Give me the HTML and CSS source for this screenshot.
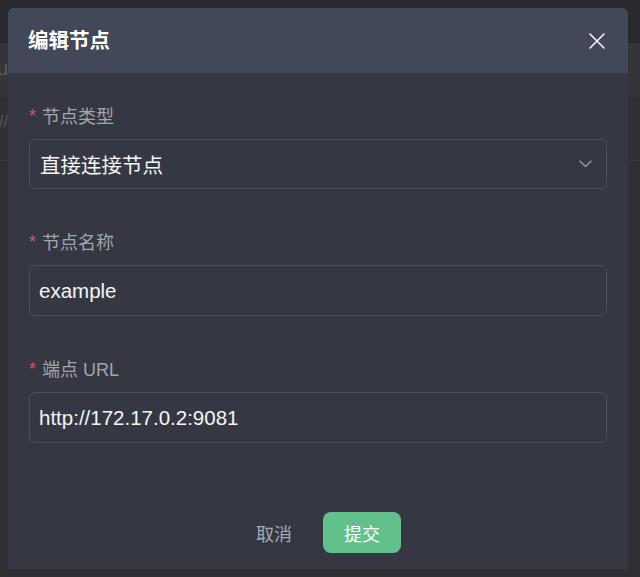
FILE: index.html
```html
<!DOCTYPE html>
<html lang="zh">
<head>
<meta charset="utf-8">
<link rel="stylesheet" href="styles.css">
</head>
<body>
<div class="page">
  <div class="band band-top"></div>
  <div class="band band-row"><span class="peek peek-u">u</span></div>
  <div class="band band-sub"><span class="peek peek-slash">//</span></div>
  <div class="band band-rest"></div>
</div>
<div class="modal">
  <div class="modal-header">
    <span class="modal-title">编辑节点</span>
    <svg class="close" width="16" height="16" viewBox="0 0 16 16"><path d="M1 1L15 15M15 1L1 15" stroke="#f2f3f5" stroke-width="1.6" fill="none" stroke-linecap="round"/></svg>
  </div>
  <div class="modal-body">
    <div class="field">
      <div class="label"><span class="req">*</span>节点类型</div>
      <div class="input select"><span>直接连接节点</span>
        <svg class="chev" width="13" height="8" viewBox="0 0 13 8"><path d="M1 1.2L6.5 6.5L12 1.2" stroke="#8a8e99" stroke-width="1.6" fill="none" stroke-linecap="round" stroke-linejoin="round"/></svg>
      </div>
    </div>
    <div class="field">
      <div class="label"><span class="req">*</span>节点名称</div>
      <div class="input"><span>example</span></div>
    </div>
    <div class="field">
      <div class="label"><span class="req">*</span>端点 URL</div>
      <div class="input"><span>http://172.17.0.2:9081</span></div>
    </div>
  </div>
  <div class="modal-footer">
    <button class="btn btn-text">取消</button>
    <button class="btn btn-primary">提交</button>
  </div>
</div>
</body>
</html>
```
FILE: styles.css
```css
* { box-sizing: border-box; }
html, body { margin: 0; padding: 0; }
body {
  width: 640px;
  height: 577px;
  overflow: hidden;
  background: #2e2f33;
  font-family: "Liberation Sans", "Noto Sans CJK SC", sans-serif;
  position: relative;
}
.page { display: flex; flex-direction: column; height: 577px; }
.band { position: relative; }
.band-top { height: 43px; background: #2a2b2e; }
.band-row { height: 54px; background: #343539; }
.band-sub { height: 64px; background: #303135; border-bottom: 1px solid #37383c; }
.band-rest { flex: 1; background: #2f3034; }
.peek { position: absolute; color: #5a5c62; font-size: 20px; }
.peek-u { left: -3px; top: 14px; }
.peek-slash { left: -1px; top: 16px; font-size: 16px; color: #55575c; }

.modal {
  position: absolute;
  left: 8px;
  top: 8px;
  width: 620px;
  height: 561px;
  background: #353842;
  border-radius: 6px 6px 0 0;
  display: flex;
  flex-direction: column;
  overflow: hidden;
}
.modal-header {
  height: 65px;
  background: #424857;
  display: flex;
  align-items: center;
  justify-content: space-between;
  padding: 0 23px 0 20px;
}
.modal-title {
  color: #ffffff;
  font-size: 20.5px;
  font-weight: bold;
  line-height: 28px;
}
.close { display: block; }
.modal-body {
  padding: 32px 21px 0 21px;
  display: flex;
  flex-direction: column;
  gap: 42px;
}
.field { display: flex; flex-direction: column; gap: 10px; }
.label {
  color: #a2a5ad;
  font-size: 18px;
  line-height: 24px;
  display: flex;
  align-items: center;
}
.req {
  color: #cf5468;
  font-size: 18px;
  margin-right: 6px;
  position: relative;
  top: -1px;
}
.input {
  height: 51px;
  border: 1px solid #4b4f5d;
  border-radius: 6px;
  background: #353842;
  color: #f4f5f7;
  font-size: 20.5px;
  display: flex;
  align-items: center;
  justify-content: space-between;
  padding: 0 14px 0 9px;
}
.select { height: 50px; padding-left: 10px; }
.chev { display: block; margin-top: 0; }
.modal-footer {
  margin-top: auto;
  padding-bottom: 16px;
  display: flex;
  justify-content: center;
  gap: 10px;
}
.btn {
  width: 78px;
  height: 41px;
  border: none;
  border-radius: 8px;
  font-family: "Liberation Sans", "Noto Sans CJK SC", sans-serif;
  font-size: 18px;
  padding: 0;
}
.btn-text { background: transparent; color: #a5a8b0; }
.btn-primary { background: #62c08c; color: #ffffff; }
```
